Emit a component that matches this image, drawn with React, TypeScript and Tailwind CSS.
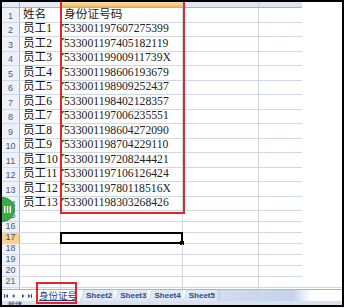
const ids = [
  '533001197607275399',
  '533001197405182119',
  '53300119900911739X',
  '533001198606193679',
  '533001198909252437',
  '533001198402128357',
  '533001197006235551',
  '533001198604272090',
  '533001198704229110',
  '533001197208244421',
  '533001197106126424',
  '53300119780118516X',
  '533001198303268426',
]

const cellFont = { fontFamily: '"Liberation Serif", "Noto Sans CJK SC", serif' }

function RowNum({ n, active }: { n: number; active?: boolean }) {
  return (
    <div
      className={`w-[18px] shrink-0 flex items-end justify-center text-[9px] leading-none pb-[1px] border-r border-[#9eb6ce] ${
        active ? 'bg-[#f8d28e] text-[#3d4a63]' : 'bg-[#eef2f8] text-[#4a5a78]'
      }`}
      style={{ fontFamily: '"Liberation Sans", sans-serif' }}
    >
      {n}
    </div>
  )
}

function TallRow({ n, name, id }: { n: number; name: string; id: string }) {
  return (
    <div className="flex h-[14.5px] border-b border-[#d0d7e5]">
      <RowNum n={n} />
      <div
        className="w-[41px] shrink-0 border-r border-[#d0d7e5] flex items-end pl-[3px] text-[11.6px] leading-none pb-[1px] text-[#111]"
        style={cellFont}
      >
        {name}
      </div>
      <div
        className="relative w-[122px] shrink-0 border-r border-[#d0d7e5] flex items-end pl-[3px] text-[11.7px] leading-none pb-[1px] text-[#222]"
        style={cellFont}
      >
        {n > 1 && (
          <span className="absolute left-[1px] top-[1px] w-0 h-0 border-t-[3px] border-r-[3px] border-t-[#2d7d2d] border-r-transparent" />
        )}
        {id}
      </div>
      <div className="w-[76px] shrink-0 border-r border-[#d0d7e5]" />
      <div className="w-[43px] shrink-0" />
    </div>
  )
}

function ShortRow({ n, active, selected }: { n: number; active?: boolean; selected?: boolean }) {
  return (
    <div className="flex h-[11px] border-b border-[#d0d7e5]">
      <RowNum n={n} active={active} />
      <div className="w-[41px] shrink-0 border-r border-[#d0d7e5]" />
      <div className="relative w-[122px] shrink-0 border-r border-[#d0d7e5]">
        {selected && (
          <div className="absolute -left-[1px] -top-[1px] w-[123px] h-[12px] border-2 border-black">
            <span className="absolute -right-[3px] -bottom-[3px] w-[4px] h-[4px] bg-black" />
          </div>
        )}
      </div>
      <div className="w-[76px] shrink-0 border-r border-[#d0d7e5]" />
      <div className="w-[43px] shrink-0" />
    </div>
  )
}

function Tab({ label }: { label: string }) {
  return (
    <div className="flex items-end h-full">
      <div className="w-[4px] h-full bg-[linear-gradient(to_bottom_right,transparent_48%,#8fa8c8_50%,#dfe8f4_54%)]" />
      <div
        className="px-[2px] h-full flex items-center text-[8px] font-bold text-[#2a4a86] bg-[#dfe8f4]"
        style={{ fontFamily: '"Liberation Sans", sans-serif' }}
      >
        {label}
      </div>
    </div>
  )
}

function NavArrows() {
  return (
    <svg width="30" height="8" viewBox="0 0 30 8" className="shrink-0">
      <g fill="#2a4a86">
        <rect x="1" y="2" width="1" height="4" />
        <path d="M2.5 4 L5 2 L5 6 Z" />
        <path d="M9 4 L11.5 2 L11.5 6 Z" />
        <path d="M19 2 L21.5 4 L19 6 Z" />
        <path d="M25 2 L27.5 4 L25 6 Z" />
        <rect x="28" y="2" width="1" height="4" />
      </g>
    </svg>
  )
}

export default function App() {
  return (
    <div className="w-[345px] h-[308px] bg-white overflow-hidden">
      <div className="relative w-[344px] h-[307px] border-2 border-black overflow-hidden flex flex-col">
        {/* column headers */}
        <div className="flex h-[6px] shrink-0 border-b border-[#9eb6ce]">
          <div className="w-[18px] shrink-0 bg-[#e4ebf5] border-r border-[#9eb6ce]" />
          <div className="w-[41px] shrink-0 bg-[#e4ebf5] border-r border-[#c5d2e3]" />
          <div className="w-[122px] shrink-0 bg-[linear-gradient(#fbdca6,#f3bb5d)] border-r border-[#c5d2e3]" />
          <div className="w-[76px] shrink-0 bg-[#dfe6f0] border-r border-[#c5d2e3]" />
          <div className="w-[43px] shrink-0 bg-[#dfe6f0]" />
        </div>

        {/* rows */}
        <div className="flex-1 min-h-0 overflow-hidden">
          <TallRow n={1} name="姓名" id="身份证号码" />
          {ids.map((id, i) => (
            <TallRow key={i} n={i + 2} name={`员工${i + 1}`} id={id} />
          ))}
          <ShortRow n={15} />
          <ShortRow n={16} />
          <ShortRow n={17} active selected />
          <ShortRow n={18} />
          <ShortRow n={19} />
          <ShortRow n={20} />
          <ShortRow n={21} />
          <ShortRow n={22} />
        </div>

        {/* sheet tabs */}
        <div className="h-[12px] shrink-0 flex items-stretch bg-white border-t border-[#9eb6ce]">
          <div className="w-[34px] shrink-0 flex items-center pl-[1px]">
            <NavArrows />
          </div>
          <div
            className="px-[3px] flex items-center text-[9.5px] text-[#1f3c7a] bg-white underline"
            style={{ fontFamily: '"Noto Sans CJK SC", sans-serif' }}
          >
            身份证号
          </div>
          <Tab label="Sheet2" />
          <Tab label="Sheet3" />
          <Tab label="Sheet4" />
          <Tab label="Sheet5" />
          <div className="w-[4px] bg-[#c9d7ea]" />
          <div className="w-[90px] bg-[linear-gradient(to_right,#cfdcee,#c5d4ea_80%,#ffffff)]" />
        </div>

        {/* status bar */}
        <div
          className="h-[4px] shrink-0 bg-[#d6e2f2] text-[7px] leading-none pl-[6px] text-[#2a4a86] overflow-hidden"
          style={{ fontFamily: '"Noto Sans CJK SC", sans-serif' }}
        >
          就绪
        </div>

        {/* red annotations */}
        <div className="absolute left-[58px] -top-[2px] w-[125px] h-[214px] border-2 border-[#e0262b]" />
        <div className="absolute left-[34px] top-[280px] w-[41px] h-[22px] border-2 border-[#e0262b]" />

        {/* white area on the right */}
        <div className="absolute left-[300px] top-0 w-[42px] h-[285px] bg-white" />

        {/* green overlay button */}
        <div className="absolute -left-[12px] top-[195px] w-[25px] h-[25px] rounded-full bg-[#3daa46] border border-[#2b8a33] flex items-center justify-end pr-[3px]">
          <svg width="7" height="7" viewBox="0 0 7 7">
            <g fill="#ffffff">
              <rect x="0" y="0" width="1.4" height="7" />
              <rect x="2.8" y="0" width="1.4" height="7" />
              <rect x="5.6" y="0" width="1.4" height="7" />
            </g>
          </svg>
        </div>
      </div>
    </div>
  )
}
